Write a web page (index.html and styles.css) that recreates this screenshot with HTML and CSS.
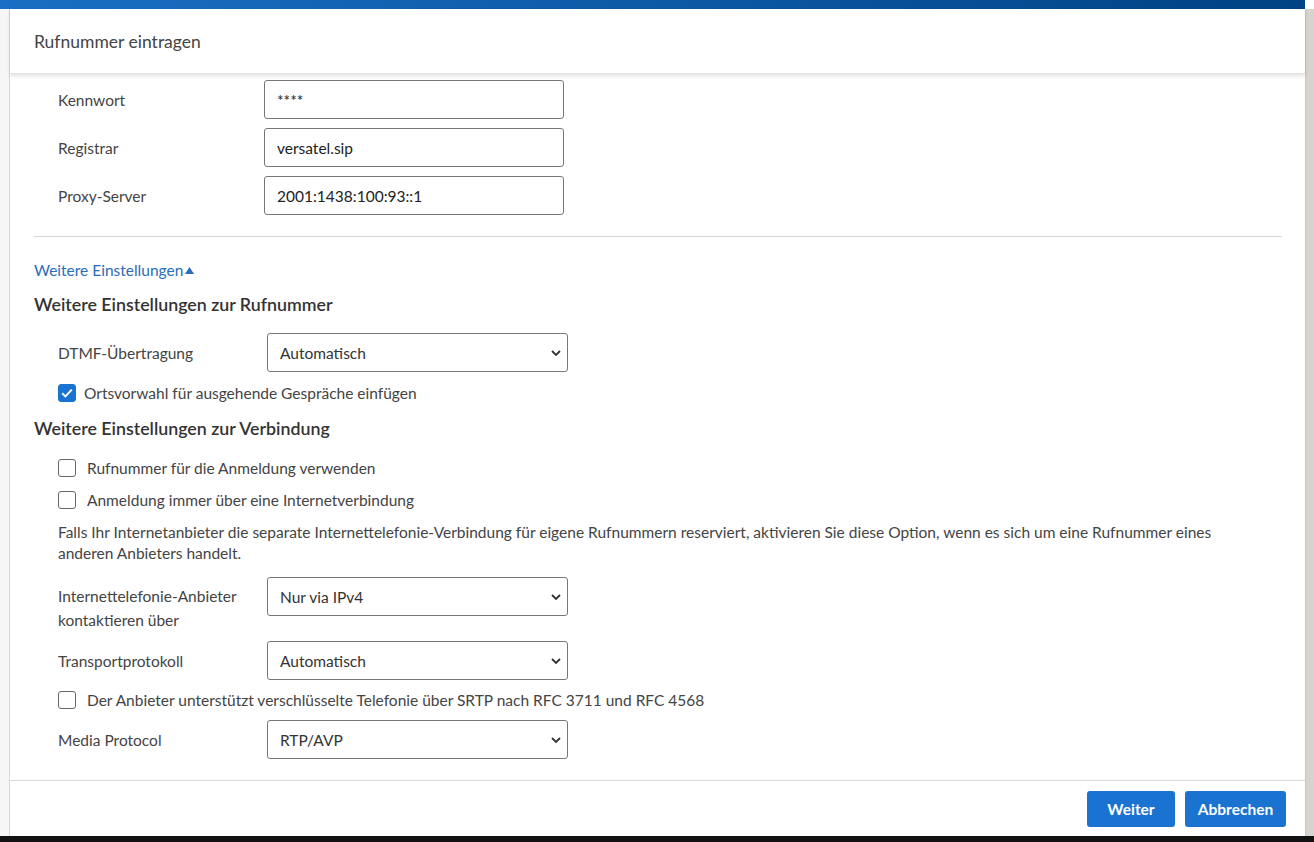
FILE: index.html
```html
<!DOCTYPE html>
<html lang="de">
<head>
<meta charset="utf-8">
<title>Rufnummer eintragen</title>
<link rel="stylesheet" href="styles.css">
</head>
<body>
<div class="page">
  <div class="topbar"></div>
  <div class="main">
    <div class="gutter"></div>
    <div class="dialog">
      <div class="dialog-header">Rufnummer eintragen</div>
      <div class="dialog-body">
        <div class="row">
          <label class="lbl">Kennwort</label>
          <input class="txt" type="text" value="****">
        </div>
        <div class="row">
          <label class="lbl">Registrar</label>
          <input class="txt" type="text" value="versatel.sip">
        </div>
        <div class="row">
          <label class="lbl">Proxy-Server</label>
          <input class="txt" type="text" value="2001:1438:100:93::1">
        </div>
        <hr class="divider">
        <a class="more" href="#">Weitere Einstellungen<svg class="tri" viewBox="0 0 9 7" width="9" height="7"><path d="M0 7L4.5 0 9 7z" fill="#2a6db8"/></svg></a>
        <h3 class="sec">Weitere Einstellungen zur Rufnummer</h3>
        <div class="row srow">
          <label class="lbl sl">DTMF-Übertragung</label>
          <div class="sel"><span>Automatisch</span><svg class="chev" viewBox="0 0 10 6" width="10" height="6"><path d="M1 1l4 4 4-4" fill="none" stroke="#333" stroke-width="1.8"/></svg></div>
        </div>
        <div class="chk chk1"><span class="box on"><svg viewBox="0 0 18 18" width="18" height="18"><path d="M4.2 9.2l3.2 3.2 6.4-6.8" fill="none" stroke="#fff" stroke-width="2"/></svg></span><span>Ortsvorwahl für ausgehende Gespräche einfügen</span></div>
        <h3 class="sec sec2">Weitere Einstellungen zur Verbindung</h3>
        <div class="chk chk2"><span class="box"></span><span>Rufnummer für die Anmeldung verwenden</span></div>
        <div class="chk chk3"><span class="box"></span><span>Anmeldung immer über eine Internetverbindung</span></div>
        <p class="note">Falls Ihr Internetanbieter die separate Internettelefonie-Verbindung für eigene Rufnummern reserviert, aktivieren Sie diese Option, wenn es sich um eine Rufnummer eines anderen Anbieters handelt.</p>
        <div class="row srow top">
          <label class="lbl sl two">Internettelefonie-Anbieter kontaktieren über</label>
          <div class="sel"><span>Nur via IPv4</span><svg class="chev" viewBox="0 0 10 6" width="10" height="6"><path d="M1 1l4 4 4-4" fill="none" stroke="#333" stroke-width="1.8"/></svg></div>
        </div>
        <div class="row srow r2">
          <label class="lbl sl">Transportprotokoll</label>
          <div class="sel"><span>Automatisch</span><svg class="chev" viewBox="0 0 10 6" width="10" height="6"><path d="M1 1l4 4 4-4" fill="none" stroke="#333" stroke-width="1.8"/></svg></div>
        </div>
        <div class="chk chk4"><span class="box"></span><span>Der Anbieter unterstützt verschlüsselte Telefonie über SRTP nach RFC 3711 und RFC 4568</span></div>
        <div class="row srow r3">
          <label class="lbl sl">Media Protocol</label>
          <div class="sel"><span>RTP/AVP</span><svg class="chev" viewBox="0 0 10 6" width="10" height="6"><path d="M1 1l4 4 4-4" fill="none" stroke="#333" stroke-width="1.8"/></svg></div>
        </div>
      </div>
      <div class="dialog-footer">
        <button class="btn btn-w">Weiter</button>
        <button class="btn btn-a">Abbrechen</button>
      </div>
    </div>
    <div class="scroll"></div>
  </div>
  <div class="bottombar"></div>
</div>
</body>
</html>
```
FILE: styles.css
```css
* { box-sizing: border-box; }
html, body { margin: 0; padding: 0; }
body {
  font-family: "Source Sans Pro", Lato, "Open Sans", sans-serif;
  color: #444;
  background: #fff;
}
.page {
  width: 1314px;
  height: 842px;
  display: flex;
  flex-direction: column;
  overflow: hidden;
}
.topbar {
  height: 9px;
  flex: none;
  background: linear-gradient(90deg, #1a6fc4 0%, #0d5aa6 50%, #004283 100%);
  margin-right: 9px;
}
.main {
  flex: 1;
  display: flex;
  min-height: 0;
}
.gutter {
  width: 10px;
  flex: none;
  background: #f6f6f6;
  border-right: 1px solid #d9d9d9;
}
.scroll {
  width: 9px;
  flex: none;
  background: #d7d4d0;
  border-left: 1px solid #c9c6c2;
}
.dialog {
  flex: 1;
  display: flex;
  flex-direction: column;
  background: #fff;
  min-width: 0;
}
.dialog-header {
  height: 65px;
  flex: none;
  padding: 22px 0 0 24px;
  font-size: 17.5px;
  color: #444;
  position: relative;
  z-index: 2;
  box-shadow: 0 2px 4px rgba(0,0,0,0.12);
  border-bottom: 1px solid #e2e2e2;
}
.dialog-body {
  flex: 1;
  overflow: hidden;
  padding: 6px 23px 0 24px;
}
.row {
  display: flex;
  align-items: center;
  margin-bottom: 9px;
  padding-left: 24px;
}
.lbl {
  width: 206px;
  font-size: 15.5px;
  color: #444;
}
.txt {
  width: 300px;
  height: 39px;
  border: 1px solid #777;
  border-radius: 3px;
  padding: 0 12px;
  font-family: inherit;
  font-size: 15.5px;
  color: #222;
  background: #fff;
}
.divider {
  border: 0;
  border-top: 1px solid #d6d6d6;
  margin: 21px 0 0 0;
}
.more {
  display: flex;
  width: fit-content;
  align-items: center;
  margin-top: 22px;
  height: 21px;
  color: #2a6db8;
  font-size: 15.5px;
  text-decoration: none;
  line-height: 18px;
}
.tri { margin-left: 2px; margin-top: 1px; }
.sec {
  margin: 13px 0 0 0;
  font-size: 17.8px;
  font-weight: 600;
  color: #333;
  line-height: 22px;
}
.srow { margin-bottom: 0; }
.sl { width: 209px; }
.sec + .srow { margin-top: 18px; }
.sel {
  width: 301px;
  height: 39px;
  border: 1px solid #777;
  border-radius: 3px;
  display: flex;
  align-items: center;
  justify-content: space-between;
  padding: 0 6px 0 12px;
  font-size: 15.5px;
  color: #333;
}
.chk {
  display: flex;
  align-items: center;
  padding-left: 24px;
  font-size: 15.5px;
  color: #444;
  line-height: 20px;
}
.box {
  width: 18px;
  height: 18px;
  border: 1.5px solid #666;
  border-radius: 3px;
  margin-right: 11px;
  flex: none;
  background: #fff;
}
.box.on {
  background: #1a73d0;
  border-color: #1a73d0;
  position: relative;
  margin-right: 8px;
}
.box.on svg { position: absolute; left: -1.5px; top: -1.5px; }
.chk1 { margin-top: 11px; }
.sec.sec2 { margin-top: 14px; }
.chk2 { margin-top: 19px; }
.chk3 { margin-top: 12px; }
.note {
  margin: 12px 0 0 0;
  padding: 0 24px;
  font-size: 15.5px;
  line-height: 21px;
  color: #444;
}
.top { align-items: flex-start; margin-top: 13px; }
.two { line-height: 24px; padding-top: 7px; }
.r2 { margin-top: 9px; }
.chk4 { margin-top: 10px; }
.r3 { margin-top: 10px; }
.dialog-footer {
  height: 56px;
  flex: none;
  border-top: 1px solid #d9d9d9;
  display: flex;
  justify-content: flex-end;
  align-items: flex-start;
  padding: 10px 19px 0 0;
  gap: 10px;
}
.btn {
  height: 36px;
  border: 0;
  border-radius: 3px;
  background: #1a73d0;
  color: #fff;
  font-family: inherit;
  font-weight: 700;
  font-size: 15.5px;
  padding: 0;
}
.btn-w { width: 88px; }
.btn-a { width: 101px; }
.bottombar {
  height: 6px;
  flex: none;
  background: #111;
}
```
